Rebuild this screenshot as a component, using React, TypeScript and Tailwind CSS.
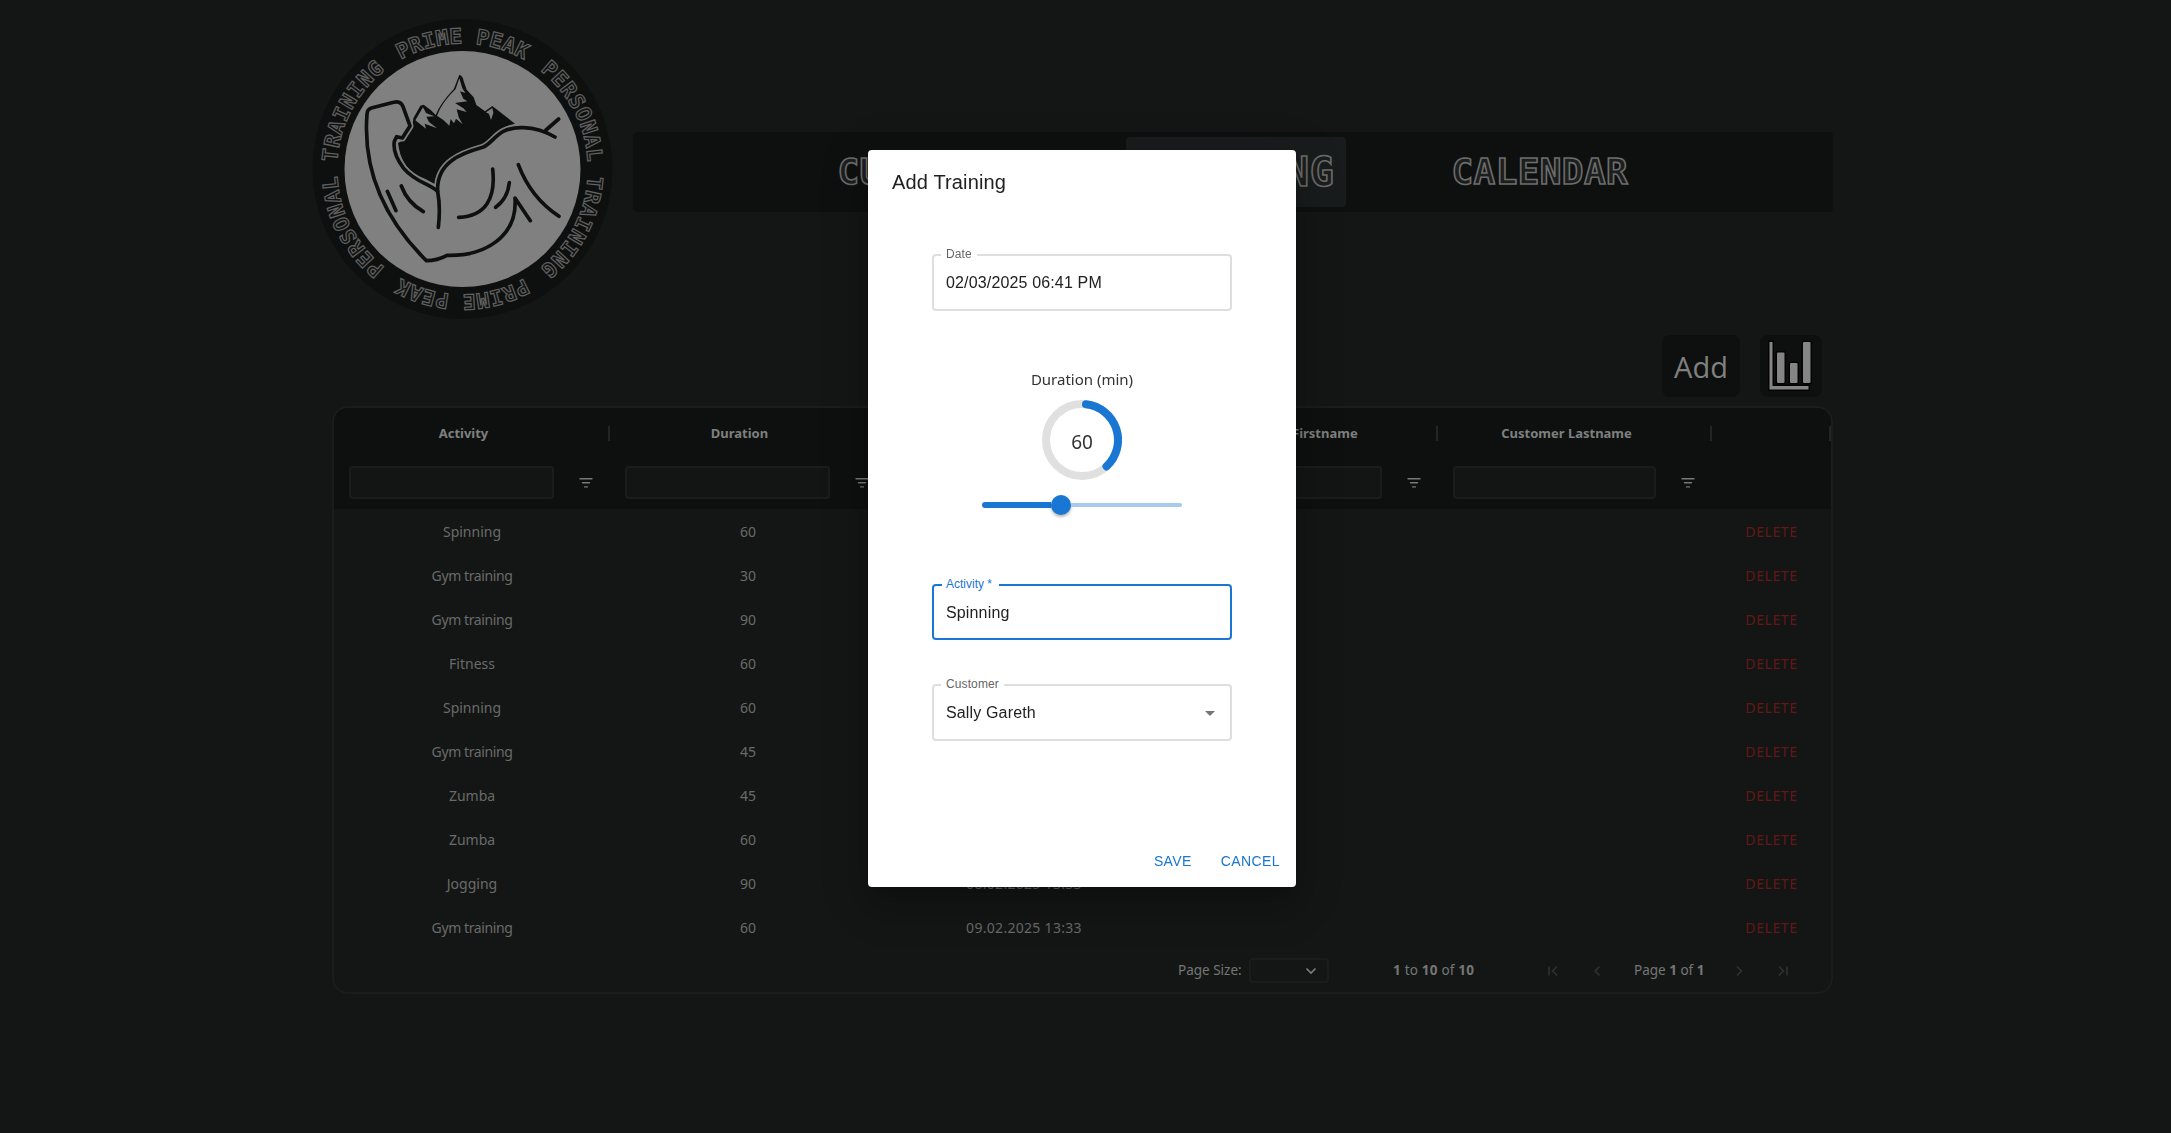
import React from "react";

const rows: [string, string, string][] = [
  ["Spinning", "60", "03.02.2025 18:41"],
  ["Gym training", "30", "04.02.2025 10:00"],
  ["Gym training", "90", "05.02.2025 12:30"],
  ["Fitness", "60", "05.02.2025 16:00"],
  ["Spinning", "60", "06.02.2025 09:00"],
  ["Gym training", "45", "06.02.2025 14:00"],
  ["Zumba", "45", "07.02.2025 11:30"],
  ["Zumba", "60", "07.02.2025 17:00"],
  ["Jogging", "90", "08.02.2025 13:33"],
  ["Gym training", "60", "09.02.2025 13:33"],
];

const columns = [
  { label: "Activity", filter: true },
  { label: "Duration", filter: true },
  { label: "Date", filter: true },
  { label: "Customer Firstname", filter: true },
  { label: "Customer Lastname", filter: true },
  { label: "", filter: false },
];

const gridCols = "grid grid-cols-[276px_276px_276px_276px_274px_119px]";

const ringWords = [
  { text: "PRIME PEAK", angle: 0, length: 129 },
  { text: "PERSONAL TRAINING", angle: 90, length: 227 },
  { text: "PRIME PEAK", angle: 180, length: 129 },
  { text: "PERSONAL TRAINING", angle: 270, length: 227 },
];

const armRidge = "M415 652 Q422 592 413 545 C408 457 484 430 548 412 C585 397 590 350 670 353 Q721 355 765 381";
const forearm =
  "M413 544 C386 520 346 516 311 475 Q277 430 283 394 L290 380 L307 384 L330 348 L309 290 Q302 271 281 277 L214 294 Q201 298 201 313 C189 467 238 612 379 752 Q412 752 441 736 C557 739 653 679 645 564 L691 632";

function Logo() {
  return (
    <svg viewBox="0 0 320 320" className="h-[320px] w-[320px] shrink-0">
      <defs>
        <path id="ring" d="M162.5 284.5 A125.5 125.5 0 0 1 162.5 33.5 A125.5 125.5 0 0 1 162.5 284.5" />
      </defs>
      <circle cx="162.5" cy="159" r="150" fill="#0e100f" />
      <circle cx="162.5" cy="159" r="118" fill="#808080" />
      {ringWords.map((w, i) => (
        <g key={i} transform={`rotate(${w.angle} 162.5 159)`}>
          <text
            fontFamily="DejaVu Sans Mono, monospace"
            fontWeight="700"
            fontSize="21"
            fill="#101211"
            stroke="#606060"
            strokeWidth="1.2"
            textAnchor="middle"
            textLength={w.length}
          >
            <textPath href="#ring" startOffset="50%" textLength={w.length}>{w.text}</textPath>
          </text>
        </g>
      ))}
      <g transform="scale(.33333)">
        <path
          fill="#0e100f"
          d="M478 194 Q488 196 491 213 L500 239 L521 262 L529 285 L555 304 L577 288 L645 341 Q605 350 578 380 Q559 404 522 411 Q434 437 404 522 Q374 505 350 496 Q302 467 294 399 L311 390 L337 348 L340 325 L361 287 L371 284 L393 301 L407 315 Q419 282 462 236 Z"
        />
        <path
          fill="#808080"
          d="M478 205 L487 235 L496 249 L480 244 L490 266 L502 274 L465 279 L490 295 L500 306 L470 298 L476 322 L488 343 L468 326 L462 340 L452 327 L448 347 Q430 327 411 317 Q425 278 467 237 Z M369 292 L378 309 L403 319 L379 320 L387 336 L411 355 L374 341 L378 356 L346 331 Z M577 294 L580 309 L573 330 L567 312 L558 307 Z"
        />
        <g fill="none" strokeLinecap="round" strokeLinejoin="round">
          <path d={armRidge} stroke="#808080" strokeWidth="21" />
          <path d={forearm} stroke="#808080" strokeWidth="21" />
          <g stroke="#0e100f" strokeWidth="11">
            <path d={armRidge} />
            <path d={forearm} />
            <path d="M738 360 L776 327 M262 544 L288 602 M304 528 Q322 577 370 605 M578 477 C588 565 557 618 476 622 M628 518 Q623 566 587 592 M655 464 Q692 563 777 619" />
          </g>
        </g>
      </g>
    </svg>
  );
}

function FilterIcon() {
  return (
    <svg viewBox="0 0 14 12" className="h-3 w-3.5" stroke="#777978" strokeWidth="1.4" strokeLinecap="round">
      <path d="M1 1.7H13M3.5 5.8H10.5M5.6 9.9H8.4" />
    </svg>
  );
}

function ChartIcon() {
  return (
    <svg viewBox="0 0 52 56" className="h-14 w-[52px]" fill="#858585" stroke="#030303" strokeWidth="3">
      <path d="M4.500 4h3v44h36v3.500h-39z" className="[paint-order:stroke]" />
      <rect x="12" y="14.500" width="7.500" height="30.500" rx="1" className="[paint-order:stroke]" />
      <rect x="25" y="25" width="7.500" height="20" rx="1" className="[paint-order:stroke]" />
      <rect x="38" y="4" width="7.500" height="41" rx="1" className="[paint-order:stroke]" />
    </svg>
  );
}

function PagerIcon({ d }: { d: string }) {
  return (
    <svg viewBox="0 0 16 16" className="h-4 w-4" fill="none" stroke="#303332" strokeWidth="1.5">
      <path d={d} />
    </svg>
  );
}

function Field({ label, value, active, arrow }: { label: string; value: string; active?: boolean; arrow?: boolean }) {
  return (
    <div
      className={
        active
          ? "relative flex h-14 items-center rounded border-2 border-[#1976d2] px-3 text-base text-[#212121]"
          : "relative flex h-[57px] items-center rounded border-2 border-[#dedede] px-3 text-base text-[#212121]"
      }
    >
      <span
        className={
          active
            ? "absolute -top-2.5 left-2 bg-white pr-[7px] pl-1 text-xs leading-4 text-[#1976d2]"
            : "absolute -top-2.5 left-[7px] bg-white px-[5px] text-xs leading-4 tracking-[0.11px] text-[#666666]"
        }
      >
        {label}
      </span>
      <span className="grow pt-px tracking-[0.15px]">{value}</span>
      {arrow && (
        <svg viewBox="0 0 24 24" className="-mr-1 h-6 w-6" fill="#757575">
          <path d="M7 10l5 5 5-5z" />
        </svg>
      )}
    </div>
  );
}

function TrainingDialog() {
  return (
    <div className="fixed inset-0 flex justify-center pt-[150px] pr-[7px]">
      <div className="flex h-[737px] w-[428px] flex-col rounded bg-white font-['Liberation_Sans',sans-serif] shadow-[0px_11px_15px_-7px_rgba(0,0,0,0.2),0px_24px_38px_3px_rgba(0,0,0,0.14),0px_9px_46px_8px_rgba(0,0,0,0.12)]">
        <h2 className="px-6 pt-4 text-xl leading-8 tracking-[0.15px] text-[#212121]">Add Training</h2>
        <div className="mx-16 mt-14 flex flex-col">
          <Field label="Date" value="02/03/2025 06:41 PM" />
          <div className="mt-14 flex flex-col items-center font-['Noto_Sans',sans-serif] text-[#333333]">
            <span className="text-[15px] leading-6">Duration (min)</span>
            <div className="relative mt-[9px] h-20 w-20">
              <svg viewBox="0 0 80 80" className="h-20 w-20" fill="none" strokeWidth="8">
                <circle cx="40" cy="40" r="36" stroke="#e0e0e0" />
                <path d="M44 4.2 A36 36 0 0 1 64.500 66.4" stroke="#1976d2" strokeLinecap="round" />
              </svg>
              <span className="absolute inset-0 flex items-center justify-center pt-[5px] text-[19px]">60</span>
            </div>
            <div className="mt-[15px] flex h-5 w-[200px] items-center">
              <div className="h-1.5 w-[69px] rounded-l-full bg-[#1976d2]" />
              <div className="h-5 w-5 rounded-full bg-[#1976d2] shadow-[0_2px_3px_rgba(0,0,0,0.3)]" />
              <div className="h-1 grow rounded-r-full bg-[#a7caed]" />
            </div>
          </div>
          <div className="mt-[69px] flex flex-col gap-11">
            <Field label="Activity *" value="Spinning" active />
            <Field label="Customer" value="Sally Gareth" arrow />
          </div>
        </div>
        <div className="mt-auto flex justify-end gap-[29px] pr-4 pb-3.5 text-sm leading-6 tracking-[0.4px] text-[#1976d2]">
          <button>SAVE</button>
          <button>CANCEL</button>
        </div>
      </div>
    </div>
  );
}

export default function App() {
  return (
    <div className="h-[1133px] w-[2171px] overflow-hidden bg-[#141615] pl-[300px] font-['Noto_Sans',sans-serif] text-[#747675]">
      <header className="flex h-[325px] pt-[10px]">
        <Logo />
        <nav className="mt-[121.5px] ml-[12.5px] flex h-20 w-[1200px] items-center rounded bg-[#0e100f] font-['DejaVu_Sans_Mono',monospace] text-[36px] font-bold text-[#1c1e1d] [-webkit-text-stroke:1.6px_#6c6c6c]">
          <span className="ml-[205px] w-[288px] tracking-[0.4px]">CUSTOMER</span>
          <span className="flex h-[70px] w-[220px] items-center justify-center rounded bg-[#191c1c] text-[40px] tracking-[0.7px]">TRAINING</span>
          <span className="ml-[106px] tracking-[0.4px]">CALENDAR</span>
        </nav>
      </header>
      <main className="w-[1533px] pl-[32px]">
        <div className="flex justify-end gap-5 pt-[9.5px] pr-[11px]">
          <button className="flex h-[62px] w-[78px] items-center justify-center rounded-lg bg-[#0e100f] pt-0.5 font-['Open_Sans',sans-serif] text-[29px] text-[#808080]">Add</button>
          <button className="flex h-[62px] w-[62px] items-center justify-center rounded-lg bg-[#0e100f]">
            <ChartIcon />
          </button>
        </div>
        <section className="mt-[9.5px] h-[588px] w-[1501px] overflow-hidden rounded-2xl border-2 border-[#1a1d1c] text-sm">
          <div className="h-[101px] bg-[#0e100f]">
            <div className={`${gridCols} h-[50px] items-center font-bold`}>
              {columns.map((c, i) => (
                <div key={i} className="flex items-center justify-end">
                  <span className="grow pt-px pr-[15px] text-center text-[13px] text-[#7e807f]">{c.label}</span>
                  <span className="h-[15px] w-0.5 bg-[#222524]" />
                </div>
              ))}
            </div>
            <div className={`${gridCols} h-[51px]`}>
              {columns.map((c, i) => (
                <div key={i} className="flex items-start pt-2 pr-[17px] pl-[15px]">
                  {c.filter && (
                    <>
                      <span className="h-[33px] grow rounded border-2 border-[#1a1d1c] bg-[#131514]" />
                      <span className="flex h-[33px] w-[39px] items-center justify-end">
                        <FilterIcon />
                      </span>
                    </>
                  )}
                </div>
              ))}
            </div>
          </div>
          {rows.map((r, i) => (
            <div key={i} className={`${gridCols} h-11 items-center pt-0.5 text-center leading-6 text-[#696b6a]`}>
              <span className={r[0].startsWith("Gym") ? "tracking-[-0.4px]" : ""}>{r[0]}</span>
              <span>{r[1]}</span>
              <span className="tracking-[0.3px]">{r[2]}</span>
              <span />
              <span />
              <span className="tracking-[0.6px] text-[#631717]">DELETE</span>
            </div>
          ))}
          <footer className="flex h-[43px] items-center pl-[844px] text-[13.5px] whitespace-nowrap">
            <span className="w-[71px]">Page Size:</span>
            <span className="flex h-[25px] w-20 items-center justify-end rounded border-2 border-[#1a1d1c] pr-2">
              <svg viewBox="0 0 16 16" className="h-4 w-4" fill="none" stroke="#7a7c7b" strokeWidth="1.7">
                <path d="M3.5 5.5L8 10l4.5-4.5" />
              </svg>
            </span>
            <span className="ml-16 w-[152px] tracking-[0.2px]"><b>1</b> to <b>10</b> of <b>10</b></span>
            <PagerIcon d="M4 3.500v9M12 3.500L7.500 8l4.500 4.500" />
            <span className="w-7" />
            <PagerIcon d="M10.500 3.500L6 8l4.500 4.500" />
            <span className="ml-[29px] w-[97px]">Page <b>1</b> of <b>1</b></span>
            <PagerIcon d="M6 3.500L10.500 8L6 12.500" />
            <span className="w-7" />
            <PagerIcon d="M12 3.500v9M4 3.500L8.500 8L4 12.500" />
          </footer>
        </section>
      </main>
      <TrainingDialog />
    </div>
  );
}
